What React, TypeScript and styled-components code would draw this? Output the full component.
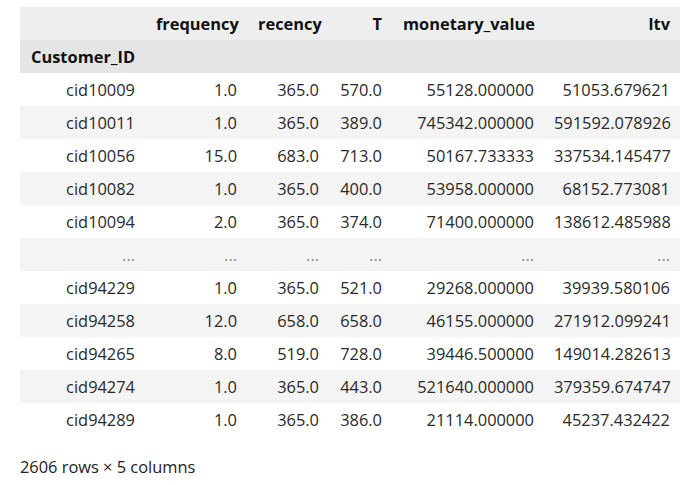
import React from 'react';
import styled, { createGlobalStyle } from 'styled-components';

const GlobalStyle = createGlobalStyle`
    body {
        margin: 0;
        background: #ffffff;
        font-family: "Segoe UI", "Open Sans", "Noto Sans", sans-serif;
    }
`;

const Output = styled.div`
    padding: 7px 20px 0 20px;
    font-size: 16.4px;
    color: #222222;
`;

const Frame = styled.table`
    border-collapse: collapse;
    border-spacing: 0;
    table-layout: fixed;
    width: 660px;
`;

const HeadRow = styled.tr<{ $shade: string }>`
    background: ${(p) => p.$shade};
    height: 33px;
`;

const ColHead = styled.th<{ $left?: boolean }>`
    padding: 0 10px 0 11px;
    text-align: ${(p) => (p.$left ? 'left' : 'right')};
    font-weight: 700;
    color: #111111;
    white-space: nowrap;
    line-height: 33px;
`;

const BodyRow = styled.tr<{ $striped: boolean }>`
    background: ${(p) => (p.$striped ? '#f4f4f4' : '#ffffff')};
    height: 33px;
`;

const Cell = styled.td<{ $muted?: boolean }>`
    padding: 0 10px;
    text-align: right;
    white-space: nowrap;
    line-height: 33px;
    color: ${(p) => (p.$muted ? '#8a8a8a' : '#2a2a2a')};
`;

const Footer = styled.p`
    margin: 19px 0 0 0;
    line-height: 23px;
    color: #222222;
`;

const widths = [125, 102, 82, 63, 152, 136];
const columns = ['frequency', 'recency', 'T', 'monetary_value', 'ltv'];

const rows: string[][] = [
    ['cid10009', '1.0', '365.0', '570.0', '55128.000000', '51053.679621'],
    ['cid10011', '1.0', '365.0', '389.0', '745342.000000', '591592.078926'],
    ['cid10056', '15.0', '683.0', '713.0', '50167.733333', '337534.145477'],
    ['cid10082', '1.0', '365.0', '400.0', '53958.000000', '68152.773081'],
    ['cid10094', '2.0', '365.0', '374.0', '71400.000000', '138612.485988'],
    ['...', '...', '...', '...', '...', '...'],
    ['cid94229', '1.0', '365.0', '521.0', '29268.000000', '39939.580106'],
    ['cid94258', '12.0', '658.0', '658.0', '46155.000000', '271912.099241'],
    ['cid94265', '8.0', '519.0', '728.0', '39446.500000', '149014.282613'],
    ['cid94274', '1.0', '365.0', '443.0', '521640.000000', '379359.674747'],
    ['cid94289', '1.0', '365.0', '386.0', '21114.000000', '45237.432422'],
];

export default function App() {
    return (
        <>
            <GlobalStyle />
            <Output>
                <Frame>
                    <colgroup>
                        {widths.map((w, i) => (
                            <col key={i} style={{ width: w }} />
                        ))}
                    </colgroup>
                    <thead>
                        <HeadRow $shade="#eeeeee">
                            <ColHead />
                            {columns.map((c) => (
                                <ColHead key={c}>{c}</ColHead>
                            ))}
                        </HeadRow>
                        <HeadRow $shade="#e5e5e5">
                            <ColHead $left>Customer_ID</ColHead>
                            {columns.map((c) => (
                                <ColHead key={c} />
                            ))}
                        </HeadRow>
                    </thead>
                    <tbody>
                        {rows.map((row, index) => (
                            <BodyRow key={index} $striped={index % 2 === 1}>
                                {row.map((value, j) => (
                                    <Cell key={j} $muted={value === '...'}>
                                        {value}
                                    </Cell>
                                ))}
                            </BodyRow>
                        ))}
                    </tbody>
                </Frame>
                <Footer>2606 rows × 5 columns</Footer>
            </Output>
        </>
    );
}
